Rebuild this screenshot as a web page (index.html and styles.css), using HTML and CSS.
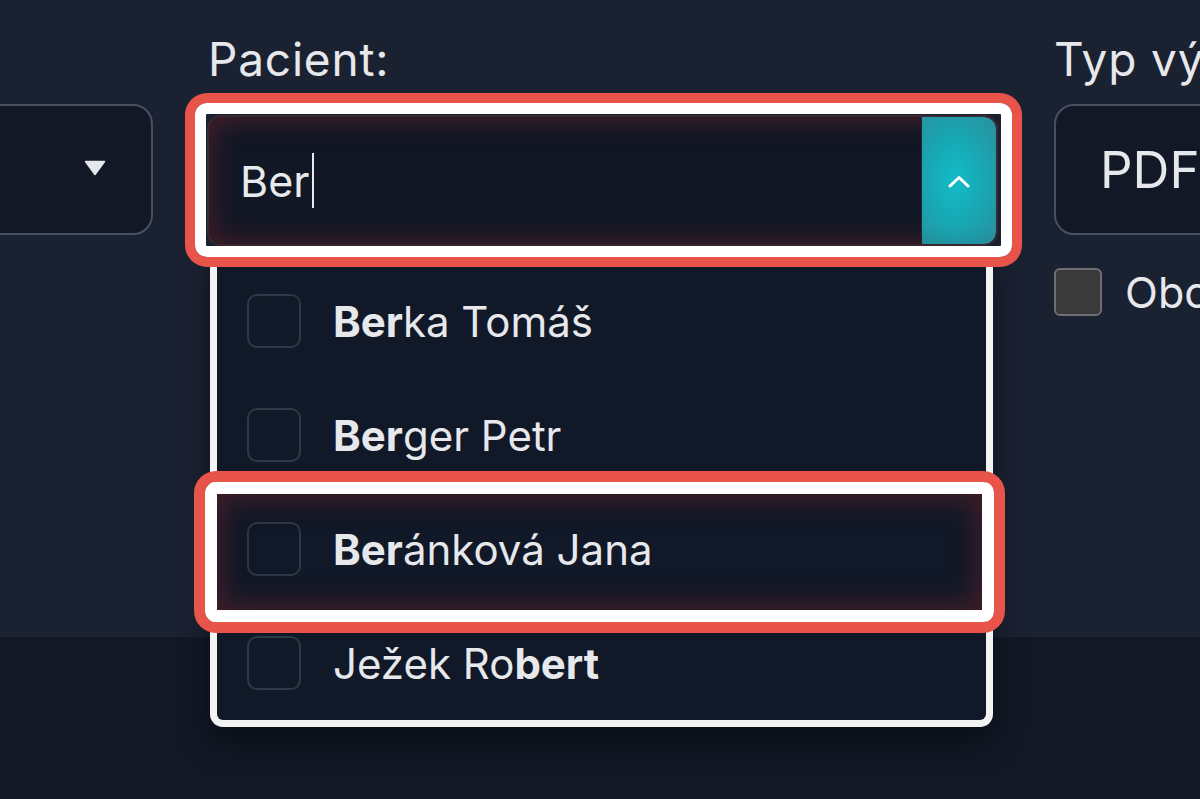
FILE: index.html
```html
<!DOCTYPE html>
<html lang="cs">
<head>
<meta charset="utf-8">
<title>Pacient</title>
<link rel="stylesheet" href="styles.css">
</head>
<body>
<div class="page">
  <section class="top">
    <div class="form-row">
      <div class="col col-left">
        <div class="label">&nbsp;</div>
        <div class="select select-left">
          <svg class="tri" width="22" height="16" viewBox="0 0 22 16"><path d="M1.5 1.5 H20.5 L11 14.5 Z" fill="#e4e7ec" stroke="#e4e7ec" stroke-width="1.5" stroke-linejoin="round"/></svg>
        </div>
      </div>
      <div class="col col-patient">
        <div class="label">Pacient:</div>
        <div class="combo-wrap">
          <div class="combo">
            <div class="combo-input">Ber<span class="text-caret"></span></div>
            <div class="combo-toggle">
              <svg width="22" height="13" viewBox="0 0 22 13"><polyline points="2,11 11,2.5 20,11" fill="none" stroke="#ffffff" stroke-width="3" stroke-linecap="round" stroke-linejoin="round"/></svg>
            </div>
          </div>
          <ul class="dropdown">
            <li class="option"><span class="cb"></span><span class="name"><b>Ber</b>ka Tomáš</span></li>
            <li class="option"><span class="cb"></span><span class="name"><b>Ber</b>ger Petr</span></li>
            <li class="option option-marked"><span class="cb"></span><span class="name"><b>Ber</b>ánková Jana</span></li>
            <li class="option"><span class="cb"></span><span class="name">Ježek Ro<b>bert</b></span></li>
          </ul>
        </div>
      </div>
      <div class="col col-right">
        <div class="label">Typ výsledku:</div>
        <div class="select select-pdf"><span class="value">PDF</span></div>
        <label class="check"><span class="check-box"></span><span class="check-text">Oboje</span></label>
      </div>
    </div>
  </section>
  <section class="bottom"></section>
</div>
</body>
</html>
```

FILE: styles.css
```css
* { box-sizing: border-box; }

html, body {
  margin: 0;
  padding: 0;
  width: 1200px;
  height: 799px;
  overflow: hidden;
}

body {
  font-family: "Inter", "Noto Sans", sans-serif;
  color: #e6e8ec;
  background: #121826;
}

.page {
  display: flex;
  flex-direction: column;
  height: 799px;
}

.top {
  height: 637px;
  background: #1a2131;
  flex: none;
}

.bottom {
  flex: 1;
  background: #121826;
}

.form-row {
  display: flex;
  align-items: flex-start;
  padding-top: 32px;
}

.col {
  flex: none;
  display: flex;
  flex-direction: column;
}

.label {
  font-size: 46px;
  line-height: 54px;
  height: 54px;
  font-weight: 400;
  letter-spacing: 0.8px;
  color: #e6e8ec;
  margin-bottom: 18px;
  white-space: nowrap;
}

.col-left {
  width: 153px;
}

.select {
  height: 131px;
  border: 2px solid #465062;
  border-radius: 20px;
  background: #121826;
  display: flex;
  align-items: center;
}

.select-left {
  margin-left: -80px;
  width: 233px;
  justify-content: flex-end;
  padding-right: 45px;
}

.tri { display: block; margin-top: -4px; }

.col-patient {
  width: 791px;
  margin-left: 54px;
}

.col-patient .label { padding-left: 1px; }

.combo-wrap {
  position: relative;
  margin-top: 11px;
}

.combo-wrap::before {
  content: "";
  position: absolute;
  top: -12px;
  left: -12px;
  right: -14px;
  bottom: -11px;
  border: 11px solid #ffffff;
  border-radius: 12px;
  box-shadow: 0 0 0 10px #e8534a;
  z-index: 3;
  pointer-events: none;
}

.combo {
  position: relative;
  height: 131px;
  border: 2px solid #3a2931;
  border-radius: 14px;
  background: #111725;
  box-shadow: inset 0 0 26px 4px rgba(110, 36, 46, 0.55);
  display: flex;
  overflow: hidden;
}

.combo-input {
  flex: 1;
  display: flex;
  align-items: center;
  padding-left: 31px;
  font-size: 43px;
  color: #e8eaee;
}

.text-caret {
  display: inline-block;
  width: 2px;
  height: 55px;
  margin-left: 3px;
  background: #e8eaee;
}

.combo-toggle {
  width: 75px;
  border-left: 1px solid #2b2530;
  border-radius: 0 12px 12px 0;
  background: radial-gradient(ellipse at 45% 50%, #12bcc8 0%, #17a9b5 45%, #2a8f9c 100%);
  display: flex;
  align-items: center;
  justify-content: center;
}

.combo-toggle svg { display: block; margin-top: 2px; }

.dropdown {
  position: absolute;
  top: 100%;
  left: 3px;
  width: 783px;
  margin: 0;
  padding: 18px 0 0 0;
  list-style: none;
  background: #111827;
  border: 7px solid #f3f3f4;
  border-top: none;
  border-radius: 0 0 13px 13px;
  box-shadow: 0 14px 30px rgba(0, 0, 0, 0.45);
  z-index: 2;
}

.option {
  position: relative;
  height: 114px;
  display: flex;
  align-items: center;
  padding-left: 30px;
  font-size: 42px;
  color: #e6e8ec;
  white-space: nowrap;
}

.option b { font-weight: 700; }

.cb {
  flex: none;
  width: 54px;
  height: 54px;
  border: 2px solid #2e3847;
  border-radius: 10px;
  margin-right: 32px;
}

.option-marked::after {
  content: "";
  position: absolute;
  top: -10px;
  bottom: -16px;
  left: -12px;
  right: -8px;
  border: 12px solid #ffffff;
  border-radius: 11px;
  box-shadow: 0 0 0 11px #e8534a, inset 0 0 26px 6px rgba(104, 32, 42, 0.55);
  pointer-events: none;
}

.col-right {
  width: 300px;
  margin-left: 56px;
}

.select-pdf {
  width: 300px;
  padding-left: 44px;
  font-size: 51px;
}

.check {
  display: flex;
  align-items: center;
  margin-top: 31px;
  font-size: 43px;
  color: #e6e8ec;
  white-space: nowrap;
}

.check-box {
  flex: none;
  width: 48px;
  height: 48px;
  background: #3a3a3b;
  border: 2px solid #6e6f72;
  border-radius: 6px;
  margin-right: 23px;
}
```
